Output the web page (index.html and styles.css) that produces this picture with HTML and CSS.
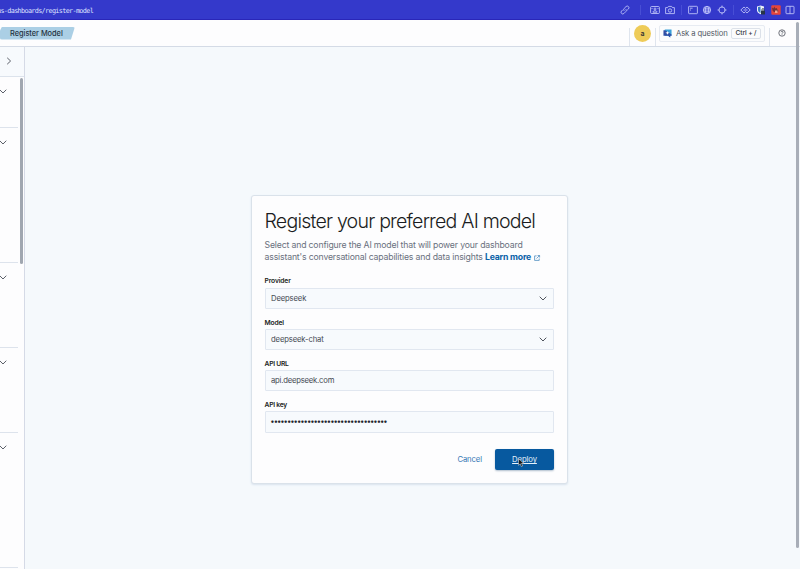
FILE: index.html
```html
<!DOCTYPE html>
<html lang="en">
<head>
<meta charset="utf-8">
<title>Register Model</title>
<link rel="stylesheet" href="styles.css">
</head>
<body>
<div class="browser-bar">
  <span class="url">us-dashboards/register-model</span>
  <div class="tools">
    <svg class="i1" viewBox="0 0 10 10"><path d="M4.2 5.8a1.7 1.7 0 0 1 0-2.4l1.9-1.9a1.7 1.7 0 0 1 2.4 2.4L7.2 5.2M5.8 4.2a1.7 1.7 0 0 1 0 2.4L3.9 8.5a1.7 1.7 0 0 1-2.4-2.4l1.300-1.300"/></svg>
    <i></i>
    <svg class="i2" viewBox="0 0 10 10"><rect x=".6" y="1.5" width="8.8" height="7" rx="1"/><circle cx="5" cy="4" r="1"/><path d="M3 7.2c0-2 4-2 4 0zM2 3v1M8 3v1"/></svg>
    <svg class="i3" viewBox="0 0 10 10"><path d="M.6 2.6h2l.8-1.2h3.2l.8 1.2h2v6H.6z"/><circle cx="5" cy="5.5" r="1.7"/></svg>
    <i></i>
    <svg class="i4" viewBox="0 0 10 10"><rect x=".6" y="1.3" width="8.8" height="7.4" rx=".7"/><path d="M2 3.2h2.6M2 5h1"/></svg>
    <svg class="i5" viewBox="0 0 10 10"><circle cx="5" cy="5" r="3.700"/><ellipse cx="5" cy="5" rx="1.700" ry="3.700"/><path d="M1.300 5h7.400M2 3.200h6M2 6.800h6"/></svg>
    <svg class="i6" viewBox="0 0 10 10"><circle cx="5" cy="5" r="3.1"/><path d="M5 .5v2.2M5 7.3v2.2M.5 5h2.2M7.3 5h2.2"/></svg>
    <i></i>
    <svg class="i7" viewBox="0 0 11 10"><path d="M5.500 3.400L4 2 .8 5 4 8l1.500-1.400M5.500 3.400L7 2l3.200 3L7 8 5.500 6.600M3.500 5h4"/></svg>
    <svg class="i8" viewBox="0 0 10 10"><path class="shield" d="M1 1.4L4.5.5 8 1.4v3.8C8 7 6.5 8.5 4.5 9.3 2.500 8.500 1 7 1 5.200z"/><path class="half" d="M4.500 1.500v6.500C3 7.300 2 6.300 2 5V2z"/><rect class="lock" x="5" y="5.500" width="4" height="4" rx=".5"/><path class="lockbar" d="M6 5.500V4.600a1 1 0 0 1 2 0v.9"/></svg>
    <svg class="i9" viewBox="0 0 10 10"><rect class="red" x=".3" y=".3" width="9.400" height="9.400" rx="1"/><path class="dark" d="M1 2.500l1.500 1 .8-2 1 2 1.500-.5.500 1.500L7.500 6l-1 1L3 7 1.500 5.500z"/><path class="pale" d="M4 5.500h2.500V8H4z"/></svg>
    <svg class="i10" viewBox="0 0 10 10"><rect x="1" y="1.300" width="8" height="7.400" rx=".7"/><path d="M5 1.300v7.400"/></svg>
  </div>
</div>
<header class="header">
  <div class="crumb">Register Model</div>
  <div class="user"><span class="avatar">a</span></div>
  <div class="ask">
    <svg class="chat" viewBox="0 0 10 10"><path class="bubble" d="M2 .5h7.500v7H8v2L5.800 7.500H2z"/><path class="bubble2" d="M.5 1.500h1.700l7.300 4.500v1.500H8v2L5.800 7.500H.5z"/><path class="spark" d="M5 2.200l.6 1.500 1.700.6-1.700.6L5 6.500l-.6-1.600-1.700-.6 1.700-.6z"/></svg>
    <span class="ask-text">Ask a question</span><kbd>Ctrl + /</kbd>
  </div>
  <div class="help"><svg viewBox="0 0 8 8"><circle cx="4" cy="4" r="3.200"/><path d="M3 3.200c0-1.400 2.100-1.300 2.100 0C5.100 4 4 3.900 4 4.700M4 5.400v.7"/></svg></div>
</header>
<div class="body">
  <aside class="side">
    <div class="toggle"><svg viewBox="0 0 6 8"><path d="M1.200.8L4.600 4 1.200 7.200"/></svg></div>
    <div class="nav">
      <div class="groups">
        <section class="g1"><svg viewBox="0 0 8 5"><path d="M.7.7L4 4 7.300.7"/></svg></section>
        <section class="g2"><svg viewBox="0 0 8 5"><path d="M.7.7L4 4 7.300.7"/></svg></section>
        <section class="g3"><svg viewBox="0 0 8 5"><path d="M.7.7L4 4 7.300.7"/></svg></section>
        <section class="g3"><svg viewBox="0 0 8 5"><path d="M.7.7L4 4 7.300.7"/></svg></section>
        <section class="g2"><svg viewBox="0 0 8 5"><path d="M.7.7L4 4 7.300.7"/></svg></section>
      </div>
      <div class="thumb"></div>
    </div>
  </aside>
  <main class="main">
    <form class="card">
      <h1>Register your preferred AI model</h1>
      <p class="desc">Select and configure the AI model that will power your dashboard<br>assistant's conversational capabilities and data insights <a>Learn more</a><svg class="ext" viewBox="0 0 6 6"><path d="M2.600.9H.6v4.500h4.600V3.500M3.600.5h2v2M5.500.6L2.500 3.500"/></svg></p>
      <label>Provider</label>
      <div class="field"><span>Deepseek</span><svg viewBox="0 0 8 5"><path d="M.7.7L4 4 7.300.7"/></svg></div>
      <label>Model</label>
      <div class="field"><span>deepseek-chat</span><svg viewBox="0 0 8 5"><path d="M.7.7L4 4 7.300.7"/></svg></div>
      <label class="api">API URL</label>
      <div class="field"><span class="address">api.deepseek.com</span></div>
      <label class="api">API key</label>
      <div class="field"><span class="dots">•••••••••••••••••••••••••••••••••••</span></div>
      <div class="actions"><span class="cancel">Cancel</span><span class="deploy">Deploy
        <svg class="cursor" viewBox="0 0 7 10"><path d="M.6.8v7L2.400 6.200l1.200 2.900 1.400-.6-1.200-2.800h2.500z"/></svg></span></div>
    </form>
    <div class="page-thumb"></div>
  </main>
</div>
</body>
</html>
```
FILE: styles.css
```css
* { box-sizing: border-box; }
body { margin: 0; width: 800px; height: 569px; overflow: hidden; display: flex; flex-direction: column; background: #f5f9fc; font-family: Inter, "Liberation Sans", sans-serif; color: #343741; }
svg { display: block; fill: none; stroke: currentColor; stroke-width: 1; flex: none; overflow: visible; }
.browser-bar { height: 20px; flex: none; background: #3439cb; border-bottom: 1px solid #2926b8; color: #c3c8fa; display: flex; justify-content: space-between; align-items: center; }
.url { font: 6.800px/10px "DejaVu Sans Mono", monospace; letter-spacing: -.66px; margin: 2px 0 0 -3px; color: #dfe2ff; white-space: nowrap; }
.tools { width: 180px; height: 20px; margin-top: 1px; display: flex; align-items: center; }
.tools svg { width: 10px; height: 10px; stroke-width: .85; }
.tools i { width: 1px; height: 10px; background: #484ed5; }
.i1 + i { margin: 0 9px 0 10px; }
.i2 { margin-right: 4.500px; }
.i3 + i { margin: 0 6px; }
.i4, .i5 { margin-right: 4.700px; }
.i6 + i { margin: 0 6.500px 0 6px; }
.tools .i7 { width: 11px; }
.i8 { margin-left: 5px; }
.i9 { margin: 0 4.300px; }
.shield { fill: #eef3fb; stroke: none; }
.half { fill: #3775c2; stroke: none; }
.lock { fill: #273447; stroke: none; }
.lockbar { stroke: #273447; }
.red { fill: #e4463c; stroke: none; }
.dark { fill: #71303a; stroke: none; }
.pale { fill: #f3a18d; stroke: none; }
.header { height: 27px; flex: none; background: #fdfdfe; border-bottom: 1px solid #d4dbe6; display: flex; align-items: center; }
.crumb { width: 75px; height: 13px; background: #abcfe5; clip-path: polygon(2px 0, 100% 0, 71px 100%, 0 100%, 0 4px); border-radius: 2px; font-size: 7.400px; line-height: 13px; font-weight: 500; letter-spacing: -.02px; padding-left: 10px; white-space: nowrap; color: #24323f; }
.user { margin-left: auto; height: 18px; align-self: flex-end; width: 27px; border-left: 1px solid #dfe5ee; border-right: 1px solid #dfe5ee; position: relative; }
.avatar { position: absolute; left: 4px; top: -3px; width: 17px; height: 17px; border-radius: 50%; background: #eecb58; font-size: 7px; line-height: 17px; font-weight: 600; text-align: center; color: #333; }
.ask { margin-left: 3px; width: 106px; height: 17px; border: 1px solid #e7ebf2; border-radius: 2px; background: #fbfcfd; display: flex; align-items: center; padding: 0 3px; font-size: 7.700px; letter-spacing: -.13px; color: #535966; white-space: nowrap; }
.chat { width: 9px; height: 9px; }
.bubble { fill: #3aa0d9; stroke: none; }
.bubble2 { fill: #314fa5; stroke: none; }
.spark { fill: #fff; stroke: none; }
.ask-text { margin-left: 4px; }
kbd { margin-left: auto; width: 30px; height: 11px; border: 1px solid #dce1e9; border-radius: 2px; font: 500 6.700px/9px Inter, sans-serif; letter-spacing: -.16px; color: #343741; text-align: center; }
.help { margin-left: 4px; width: 31px; height: 18px; align-self: flex-end; border-left: 1px solid #dfe5ee; padding: .5px 0 0 8px; color: #4c505a; }
.help svg { width: 8px; height: 8px; stroke-width: .8; }
.body { flex: 1; display: flex; min-height: 0; }
.side { width: 25px; border-right: 1.500px solid #d5dae6; display: flex; flex-direction: column; background: #fdfdfe; color: #5c606a; overflow: hidden; }
.toggle { height: 30px; flex: none; border-bottom: 1px solid #dce3ec; background: #f7fafd; padding: 10px 0 0 6px; }
.toggle svg { width: 6px; height: 8px; }
.nav { display: flex; flex: 1; }
.groups { width: 18px; flex: none; }
.groups section { border-bottom: 1px solid #dde3ec; padding-top: 12px; }
.groups svg { width: 8px; height: 5px; margin-left: -1px; }
.g1 { height: 51px; }
.g2 { height: 135.300px; }
.g3 { height: 84.800px; }
.thumb { margin: 1px 0 0 1.500px; width: 3px; height: 186px; border-radius: 2px; background: #a0a7b0; }
.main { flex: 1; display: flex; background: #f5f9fc; }
.card { margin: 148px 0 0 226px; width: 316.500px; height: 288.500px; border: 1px solid #dae2ea; border-radius: 3px; background: #fdfdfe; box-shadow: 0 1px 2px #d9e3ee; padding: 13px 12.500px 0; }
h1 { margin: 0; font-size: 19.600px; line-height: 25px; font-weight: 300; letter-spacing: -.8px; color: #1a1c21; white-space: nowrap; }
.desc { margin: 4.500px 0 0; font-size: 8.700px; line-height: 12.700px; letter-spacing: -.16px; color: #69707d; white-space: nowrap; }
.desc a { color: #0b62a8; font-weight: 700; letter-spacing: -.2px; }
.ext { display: inline-block; width: 6px; height: 6px; margin-left: 3px; color: #4d8dc0; stroke-width: .8; vertical-align: -1px; }
label { display: block; height: 9px; margin-top: 11px; font-size: 6.700px; line-height: 10px; font-weight: 600; letter-spacing: -.13px; color: #1a1c21; }
label.api { letter-spacing: -.24px; }
.desc + label { margin-top: 12.500px; }
.field { margin-top: 2.500px; height: 21.200px; margin-bottom: -2.500px; border: 1px solid #e1e7f0; border-radius: 1px; background: #f7fafd; display: flex; align-items: center; justify-content: space-between; padding: 0 6px 0 5.500px; font-size: 7.700px; letter-spacing: -.15px; color: #454952; white-space: nowrap; }
.address { letter-spacing: -.22px; }
.field svg { width: 8px; height: 5px; color: #4f545d; }
.dots { color: #22242b; letter-spacing: -1px; margin: -1px 0 0 -.7px; }
.actions { display: flex; justify-content: flex-end; align-items: center; margin-top: 19px; font-size: 7.700px; letter-spacing: -.1px; }
.cancel { color: #3477b4; margin-right: 13px; }
.deploy { position: relative; width: 59px; height: 21px; border-radius: 2px; background: #07599f; color: #e5f1fb; text-align: center; line-height: 21px; text-decoration: underline; box-shadow: 0 1px 2px #aebdcc; }
.cursor { position: absolute; left: 22.500px; top: 8.500px; width: 6.500px; height: 9.500px; }
.cursor path { fill: #151515; stroke: #eee; stroke-width: .5; }
.page-thumb { margin: -25px 1px 0 auto; width: 3.500px; height: 526px; flex: none; border-radius: 2px; background: #a8aeb8; z-index: 2; position: relative; }
```
